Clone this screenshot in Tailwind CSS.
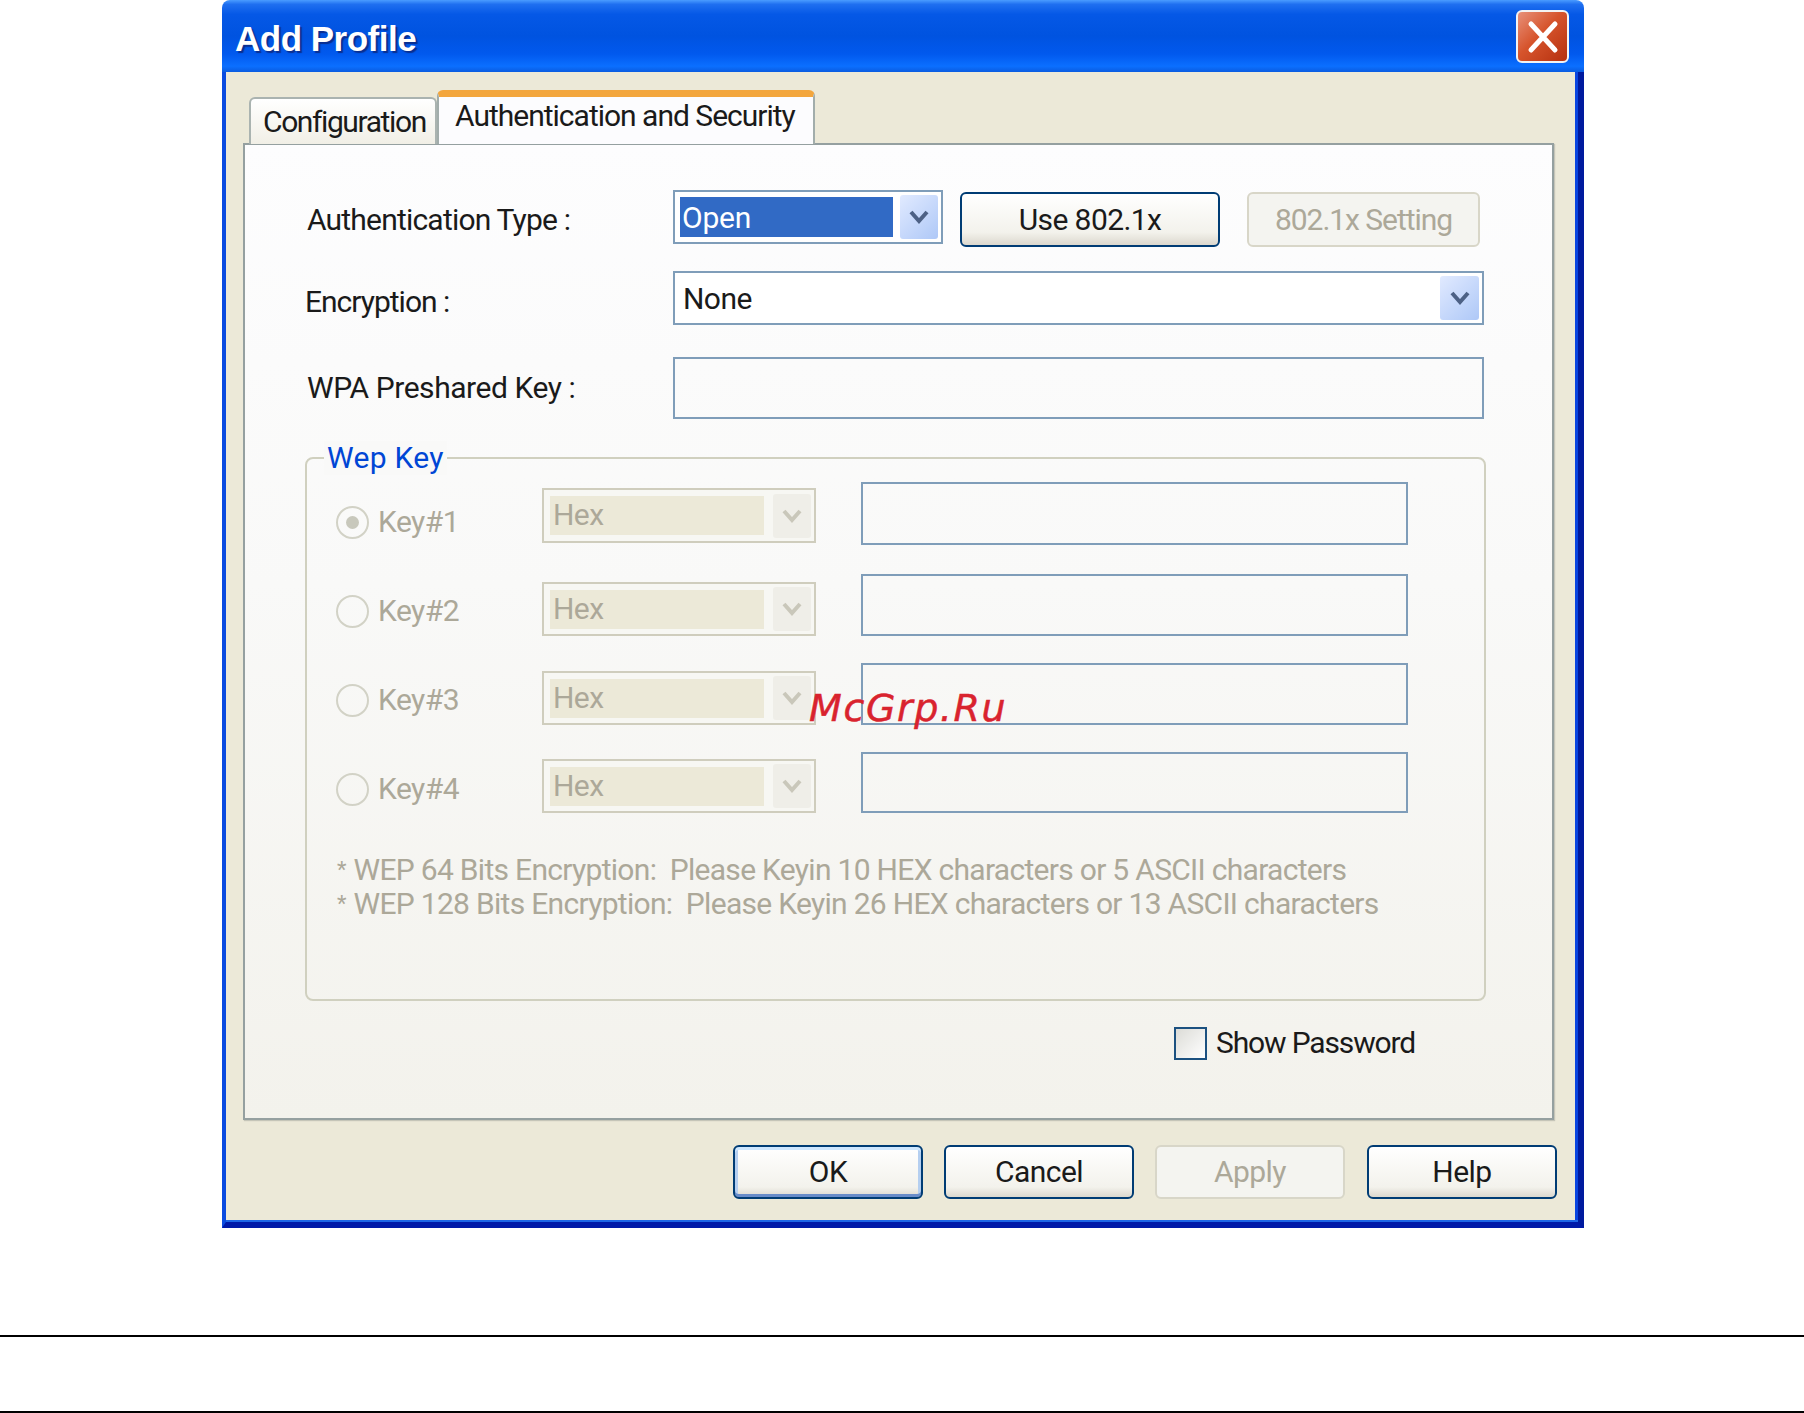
<!DOCTYPE html>
<html><head><meta charset="utf-8"><title>Add Profile</title>
<script src="https://cdn.jsdelivr.net/npm/@tailwindcss/browser@4"></script></head>
<body class="bg-white">
<div class="relative w-[1804px] h-[1413px] overflow-hidden bg-white font-['Roboto','Liberation_Sans',sans-serif] text-[30px] leading-[34px] text-[#1a1a1a]">
  <div class="ml-[222px] w-[1362px] h-[1228px] flex flex-col rounded-t-[8px] overflow-hidden">
    <div class="h-[72px] shrink-0 flex items-start justify-between pl-[13px] pr-[15px] bg-[linear-gradient(180deg,#4a9cff_0%,#1f6ff0_6%,#0558e6_20%,#0053e0_50%,#0159ee_75%,#0b6fff_92%,#0a5ce0_100%)]">
      <span class="mt-[20px] text-[35px] leading-[38px] font-bold text-white font-['Liberation_Sans'] tracking-[-0.5px] [text-shadow:2px_2px_1px_#0a2f90]">Add Profile</span>
      <div class="mt-[10px] w-[53px] h-[53px] rounded-[6px] border-2 border-[#f3f3f3] bg-[linear-gradient(135deg,#e8917a_0%,#d6542c_45%,#b5300f_100%)] flex items-center justify-center">
        <svg width="36" height="36" viewBox="0 0 36 36"><path d="M6 5 L30 31 M30 5 L6 31" stroke="#fff" stroke-width="5" stroke-linecap="round"/></svg>
      </div>
    </div>
    <div class="flex-1 flex flex-col bg-[#ece9d8] border-l-4 border-r-[6px] border-b-[6px] border-l-[#0a4be0] border-r-[#001a9e] border-b-[#0019a8] shadow-[inset_0_-2px_0_#1e66e6,inset_-3px_0_0_#0a45e0]">
      <div class="flex items-end ml-[23px] mt-[18px] h-[54px] -mb-[1px] relative z-10">
        <div class="w-[188px] h-[47px] border-2 border-b-0 border-[#aab3b0] rounded-t-[6px] bg-[linear-gradient(180deg,#fff,#f1efe6)] pl-[12px] pt-[6px] tracking-[-1.4px]">Configuration</div>
        <div class="w-[378px] h-[54px] rounded-t-[6px] border-x-2 border-[#a2adab] border-t-[7px] border-t-[#f3a63d] bg-[#fcfcfe] pl-[16px] pt-[2px] tracking-[-1px]">Authentication and Security</div>
      </div>
      <div class="ml-[17px] w-[1311px] h-[977px] border-2 border-[#95a0a0] bg-[linear-gradient(180deg,#fdfdfe_0%,#f9f9f8_45%,#f3f2ec_100%)] shadow-[1px_1px_1px_#c5c5b8]">
        <div class="flex items-start mt-[45px] ml-[62px]">
          <div class="w-[366px] pt-[13px] tracking-[-0.8px]">Authentication Type :</div>
          <div class="w-[270px] h-[54px] border-2 border-[#7f9db9] flex items-center pl-[5px] pr-[3px] bg-white">
            <div class="w-[213px] h-[40px] bg-[#316ac5] text-white pl-[2px] pt-[2px] leading-[38px] tracking-[-0.2px]">Open</div>
            <div class="ml-auto w-[38px] h-[44px] rounded-[3px] bg-[linear-gradient(135deg,#e1eaff,#aec8f7)] flex items-center justify-center">
              <svg width="22" height="18" viewBox="0 0 22 18"><path d="M3 4 L11 13 L19 4" fill="none" stroke="#4d6185" stroke-width="4"/></svg>
            </div>
          </div>
          <button class="ml-[17px] mt-[2px] w-[260px] h-[55px] rounded-[6px] border-2 border-[#003c74] bg-[linear-gradient(180deg,#fff_0%,#f3f2ec_75%,#dcd8ce_100%)] tracking-[-0.6px]">Use 802.1x</button>
          <button class="ml-[27px] mt-[2px] w-[233px] h-[55px] rounded-[6px] border-2 border-[#d8d6c8] bg-[#f4f4f0] text-[#aca899] tracking-[-1.05px]">802.1x Setting</button>
        </div>
        <div class="flex items-start mt-[24px] ml-[60px]">
          <div class="w-[368px] pt-[14px] tracking-[-1px]">Encryption :</div>
          <div class="w-[811px] h-[54px] border-2 border-[#7f9db9] flex items-center pl-[8px] pr-[3px] bg-white">
            <div class="pt-[1px] tracking-[-0.55px]">None</div>
            <div class="ml-auto w-[39px] h-[44px] rounded-[3px] bg-[linear-gradient(135deg,#e1eaff,#aec8f7)] flex items-center justify-center">
              <svg width="22" height="18" viewBox="0 0 22 18"><path d="M3 4 L11 13 L19 4" fill="none" stroke="#4d6185" stroke-width="4"/></svg>
            </div>
          </div>
        </div>
        <div class="flex items-start mt-[32px] ml-[62px]">
          <div class="w-[366px] pt-[14px] tracking-[-0.45px]">WPA Preshared Key :</div>
          <div class="w-[811px] h-[62px] border-2 border-[#7f9db9]"></div>
        </div>
        <div class="relative mt-[38px] ml-[60px] w-[1181px] h-[544px] border-2 border-[#d0d0bf] rounded-[8px]">
          <div class="absolute left-[17px] -top-[18px] px-[3px] bg-[#f9f9f8] text-[#0046d5] tracking-[0.3px]">Wep Key</div>
          <div class="flex items-start mt-[23px] ml-[29px] h-[63px] text-[#aca899]">
            <div class="w-[206px] mt-[23px] flex items-center">
              <span class="w-[33px] h-[33px] rounded-full border-2 border-[#d2d2c6] flex items-center justify-center"><span class="w-[13px] h-[13px] rounded-full bg-[#c8c8bc]"></span></span>
              <span class="ml-[9px] tracking-[-0.55px]">Key#1</span>
            </div>
            <div class="mt-[6px] w-[274px] h-[55px] border-2 border-[#cfcdbd] flex items-center pl-[6px] pr-[3px] bg-[#f7f7f3]">
              <div class="w-[214px] h-[39px] bg-[#ece9d8] pl-[3px] leading-[37px] tracking-[-0.55px]">Hex</div>
              <div class="ml-auto w-[38px] h-[44px] rounded-[3px] bg-[#efeee8] flex items-center justify-center"><svg width="22" height="18" viewBox="0 0 22 18"><path d="M3 4 L11 13 L19 4" fill="none" stroke="#c9c7ba" stroke-width="4"/></svg></div>
            </div>
            <div class="ml-[45px] w-[547px] h-[63px] border-2 border-[#7f9db9]"></div>
          </div>
          <div class="flex items-start mt-[29px] ml-[29px] h-[62px] text-[#aca899]">
            <div class="w-[206px] mt-[20px] flex items-center">
              <span class="w-[33px] h-[33px] rounded-full border-2 border-[#d2d2c6]"></span>
              <span class="ml-[9px] tracking-[-0.55px]">Key#2</span>
            </div>
            <div class="mt-[8px] w-[274px] h-[54px] border-2 border-[#cfcdbd] flex items-center pl-[6px] pr-[3px] bg-[#f7f7f3]">
              <div class="w-[214px] h-[39px] bg-[#ece9d8] pl-[3px] leading-[37px] tracking-[-0.55px]">Hex</div>
              <div class="ml-auto w-[38px] h-[44px] rounded-[3px] bg-[#efeee8] flex items-center justify-center"><svg width="22" height="18" viewBox="0 0 22 18"><path d="M3 4 L11 13 L19 4" fill="none" stroke="#c9c7ba" stroke-width="4"/></svg></div>
            </div>
            <div class="ml-[45px] w-[547px] h-[62px] border-2 border-[#7f9db9]"></div>
          </div>
          <div class="flex items-start mt-[27px] ml-[29px] h-[62px] text-[#aca899]">
            <div class="w-[206px] mt-[20px] flex items-center">
              <span class="w-[33px] h-[33px] rounded-full border-2 border-[#d2d2c6]"></span>
              <span class="ml-[9px] tracking-[-0.55px]">Key#3</span>
            </div>
            <div class="mt-[8px] w-[274px] h-[54px] border-2 border-[#cfcdbd] flex items-center pl-[6px] pr-[3px] bg-[#f7f7f3]">
              <div class="w-[214px] h-[39px] bg-[#ece9d8] pl-[3px] leading-[37px] tracking-[-0.55px]">Hex</div>
              <div class="ml-auto w-[38px] h-[44px] rounded-[3px] bg-[#efeee8] flex items-center justify-center"><svg width="22" height="18" viewBox="0 0 22 18"><path d="M3 4 L11 13 L19 4" fill="none" stroke="#c9c7ba" stroke-width="4"/></svg></div>
            </div>
            <div class="ml-[45px] w-[547px] h-[62px] border-2 border-[#7f9db9]"></div>
          </div>
          <div class="flex items-start mt-[27px] ml-[29px] h-[61px] text-[#aca899]">
            <div class="w-[206px] mt-[20px] flex items-center">
              <span class="w-[33px] h-[33px] rounded-full border-2 border-[#d2d2c6]"></span>
              <span class="ml-[9px] tracking-[-0.55px]">Key#4</span>
            </div>
            <div class="mt-[7px] w-[274px] h-[54px] border-2 border-[#cfcdbd] flex items-center pl-[6px] pr-[3px] bg-[#f7f7f3]">
              <div class="w-[214px] h-[39px] bg-[#ece9d8] pl-[3px] leading-[37px] tracking-[-0.55px]">Hex</div>
              <div class="ml-auto w-[38px] h-[44px] rounded-[3px] bg-[#efeee8] flex items-center justify-center"><svg width="22" height="18" viewBox="0 0 22 18"><path d="M3 4 L11 13 L19 4" fill="none" stroke="#c9c7ba" stroke-width="4"/></svg></div>
            </div>
            <div class="ml-[45px] w-[547px] h-[61px] border-2 border-[#7f9db9]"></div>
          </div>
          <div class="mt-[40px] ml-[30px] text-[#aca899] tracking-[-0.7px]">
            <div class="whitespace-pre"><span class="mr-[3px] text-[22px] align-top">* </span>WEP 64 Bits Encryption:  Please Keyin 10 HEX characters or 5 ASCII characters</div>
            <div class="whitespace-pre"><span class="mr-[3px] text-[22px] align-top">* </span>WEP 128 Bits Encryption:  Please Keyin 26 HEX characters or 13 ASCII characters</div>
          </div>
        </div>
        <div class="flex items-center mt-[25px] ml-[929px]">
          <span class="w-[33px] h-[33px] border-2 border-[#1c5180] bg-[linear-gradient(135deg,#dcdcd7,#fff)]"></span>
          <span class="ml-[9px] tracking-[-1.15px]">Show Password</span>
        </div>
      </div>
      <div class="flex justify-end gap-[21px] pr-[21px] mt-[25px]">
        <button class="w-[190px] h-[54px] rounded-[6px] border-2 border-[#003c74] bg-[linear-gradient(180deg,#fff,#f3f2ec_80%,#dcd8ce)] shadow-[inset_0_3px_0_#cee7ff,inset_0_-3px_0_#698cc9,inset_3px_0_0_#b5cff0,inset_-3px_0_0_#b5cff0] tracking-[-0.55px]">OK</button>
        <button class="w-[190px] h-[54px] rounded-[6px] border-2 border-[#003c74] bg-[linear-gradient(180deg,#fff,#f3f2ec_80%,#dcd8ce)] tracking-[-0.55px]">Cancel</button>
        <button class="w-[190px] h-[54px] rounded-[6px] border-2 border-[#d8d6c8] bg-[#f4f4f0] text-[#aca899] tracking-[-0.55px]">Apply</button>
        <button class="ml-[1px] w-[190px] h-[54px] rounded-[6px] border-2 border-[#003c74] bg-[linear-gradient(180deg,#fff,#f3f2ec_80%,#dcd8ce)] tracking-[-0.55px]">Help</button>
      </div>
    </div>
  </div>
  <div class="mt-[107px] h-[2px] bg-black"></div>
  <div class="mt-[74px] h-[2px] bg-black"></div>
  <div class="absolute left-[809px] top-[684px] text-[38px] leading-[48px] italic text-[#d9232e] font-['DejaVu_Sans'] tracking-[1.6px] [-webkit-text-stroke:0.5px_#d9232e]">McGrp.Ru</div>
</div>
</body></html>
